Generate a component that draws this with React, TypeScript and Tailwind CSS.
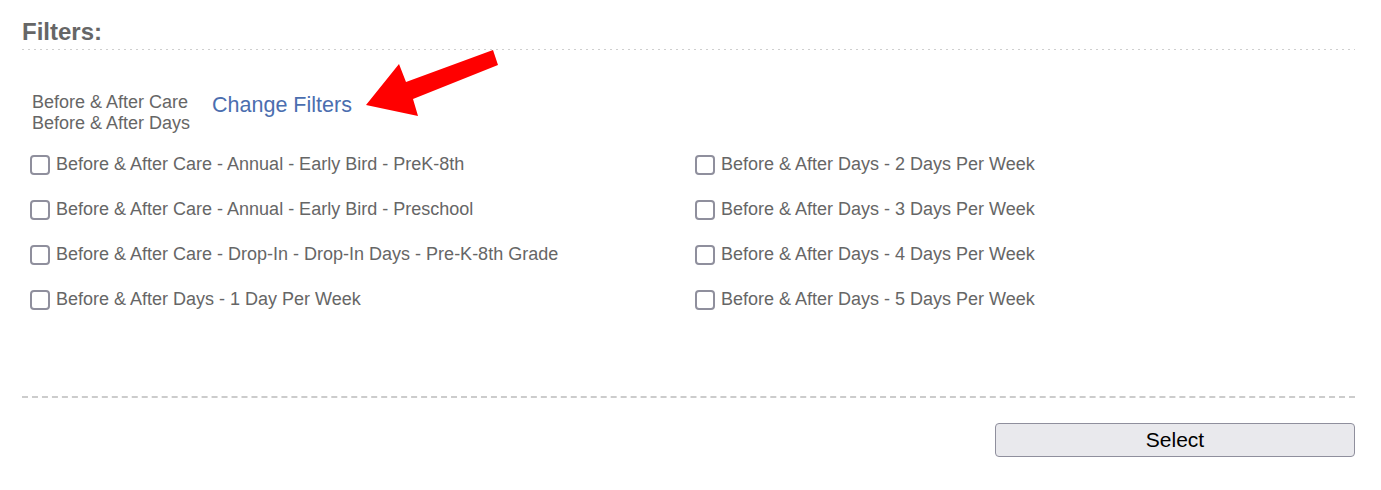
import React from "react";

const left = [
  "Before & After Care - Annual - Early Bird - PreK-8th",
  "Before & After Care - Annual - Early Bird - Preschool",
  "Before & After Care - Drop-In - Drop-In Days - Pre-K-8th Grade",
  "Before & After Days - 1 Day Per Week",
];
const right = [
  "Before & After Days - 2 Days Per Week",
  "Before & After Days - 3 Days Per Week",
  "Before & After Days - 4 Days Per Week",
  "Before & After Days - 5 Days Per Week",
];

function Row({ label }: { label: string }) {
  return (
    <label className="h-[45px] flex items-center">
      <span className="w-[20px] h-[20px] border-2 border-[#8f8f9d] rounded-[4px] bg-white shrink-0" />
      <span className="ml-[6px] text-[18px] leading-[21px] text-[#666]">{label}</span>
    </label>
  );
}

export default function App() {
  return (
    <div
      className="relative w-[1381px] h-[490px] bg-white pl-[22px] pr-[26px] pt-[18px]"
      style={{ fontFamily: '"Liberation Sans", Arial, sans-serif' }}
    >
      <h2 className="text-[24px] leading-[28px] font-bold text-[#666]">Filters:</h2>
      <div className="mt-[3px] h-px bg-[repeating-linear-gradient(to_right,#cfcfcf_0_2px,transparent_2px_6px)]" />
      <div className="mt-[42px] pl-[10px] flex items-start">
        <div className="text-[18px] leading-[21px] text-[#666]">
          <div>Before &amp; After Care</div>
          <div>Before &amp; After Days</div>
        </div>
        <a className="ml-[22px] text-[21.5px] leading-[25px] text-[#4b6eaf] mt-[1px] cursor-pointer">
          Change Filters
        </a>
      </div>
      <div className="mt-[8px] pl-[8px] grid grid-cols-[665px_1fr]">
        <div className="flex flex-col">
          {left.map((l) => (
            <Row key={l} label={l} />
          ))}
        </div>
        <div className="flex flex-col">
          {right.map((l) => (
            <Row key={l} label={l} />
          ))}
        </div>
      </div>
      <div className="mt-[74px] border-t-2 border-dashed border-[#cccccc]" />
      <div className="mt-[25px] flex justify-end">
        <button className="w-[360px] h-[34px] border border-[#8f8f9d] rounded-[4px] bg-[#e9e9ed] text-[21px] text-black">
          Select
        </button>
      </div>
      <svg className="absolute left-0 top-0 pointer-events-none" width="1381" height="490">
        <polygon
          points="366,105 399,64 406,82 493,50 498,65 413,99 418,116"
          fill="#ff0000"
        />
      </svg>
    </div>
  );
}
